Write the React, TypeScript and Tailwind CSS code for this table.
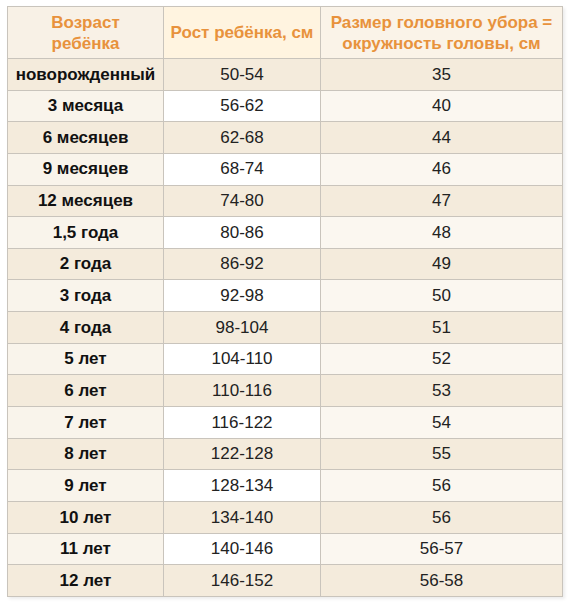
const rows: [string, string, string][] = [
  ["новорожденный", "50-54", "35"],
  ["3 месяца", "56-62", "40"],
  ["6 месяцев", "62-68", "44"],
  ["9 месяцев", "68-74", "46"],
  ["12 месяцев", "74-80", "47"],
  ["1,5 года", "80-86", "48"],
  ["2 года", "86-92", "49"],
  ["3 года", "92-98", "50"],
  ["4 года", "98-104", "51"],
  ["5 лет", "104-110", "52"],
  ["6 лет", "110-116", "53"],
  ["7 лет", "116-122", "54"],
  ["8 лет", "122-128", "55"],
  ["9 лет", "128-134", "56"],
  ["10 лет", "134-140", "56"],
  ["11 лет", "140-146", "56-57"],
  ["12 лет", "146-152", "56-58"],
]

export default function App() {
  return (
    <div className="min-h-[604px] bg-white pl-[7px] pt-[6px]" style={{ fontFamily: '"Liberation Sans", Arial, sans-serif' }}>
      <table className="border-collapse text-[17px] text-center shadow-[2px_2px_3px_rgba(0,0,0,0.08)]">
        <thead>
          <tr className="h-[52px] font-bold text-[#e8923c] leading-[21px]">
            <th className="w-[156px] border border-[#c9c4bc] bg-[#f8f1e6] font-bold">
              Возраст
              <br />
              ребёнка
            </th>
            <th className="w-[157px] border border-[#c9c4bc] bg-[#fff4e0] font-bold">Рост ребёнка, см</th>
            <th className="w-[242px] border border-[#c9c4bc] bg-[#faf3e8] font-bold">
              Размер головного убора =
              <br />
              окружность головы, см
            </th>
          </tr>
        </thead>
        <tbody>
          {rows.map(([age, height, size], i) => {
            const dark = i % 2 === 0
            return (
              <tr key={age} className="h-[31.65px] text-[#222]">
                <td className={`border border-[#c9c4bc] font-bold text-[#111] ${dark ? "bg-[#f4ebdc]" : "bg-[#f9f4eb]"}`}>{age}</td>
                <td className={`border border-[#c9c4bc] ${dark ? "bg-[#f4ebdc]" : "bg-white"}`}>{height}</td>
                <td className={`border border-[#c9c4bc] ${dark ? "bg-[#f4ebdc]" : "bg-[#fbf7f0]"}`}>{size}</td>
              </tr>
            )
          })}
        </tbody>
      </table>
    </div>
  )
}
